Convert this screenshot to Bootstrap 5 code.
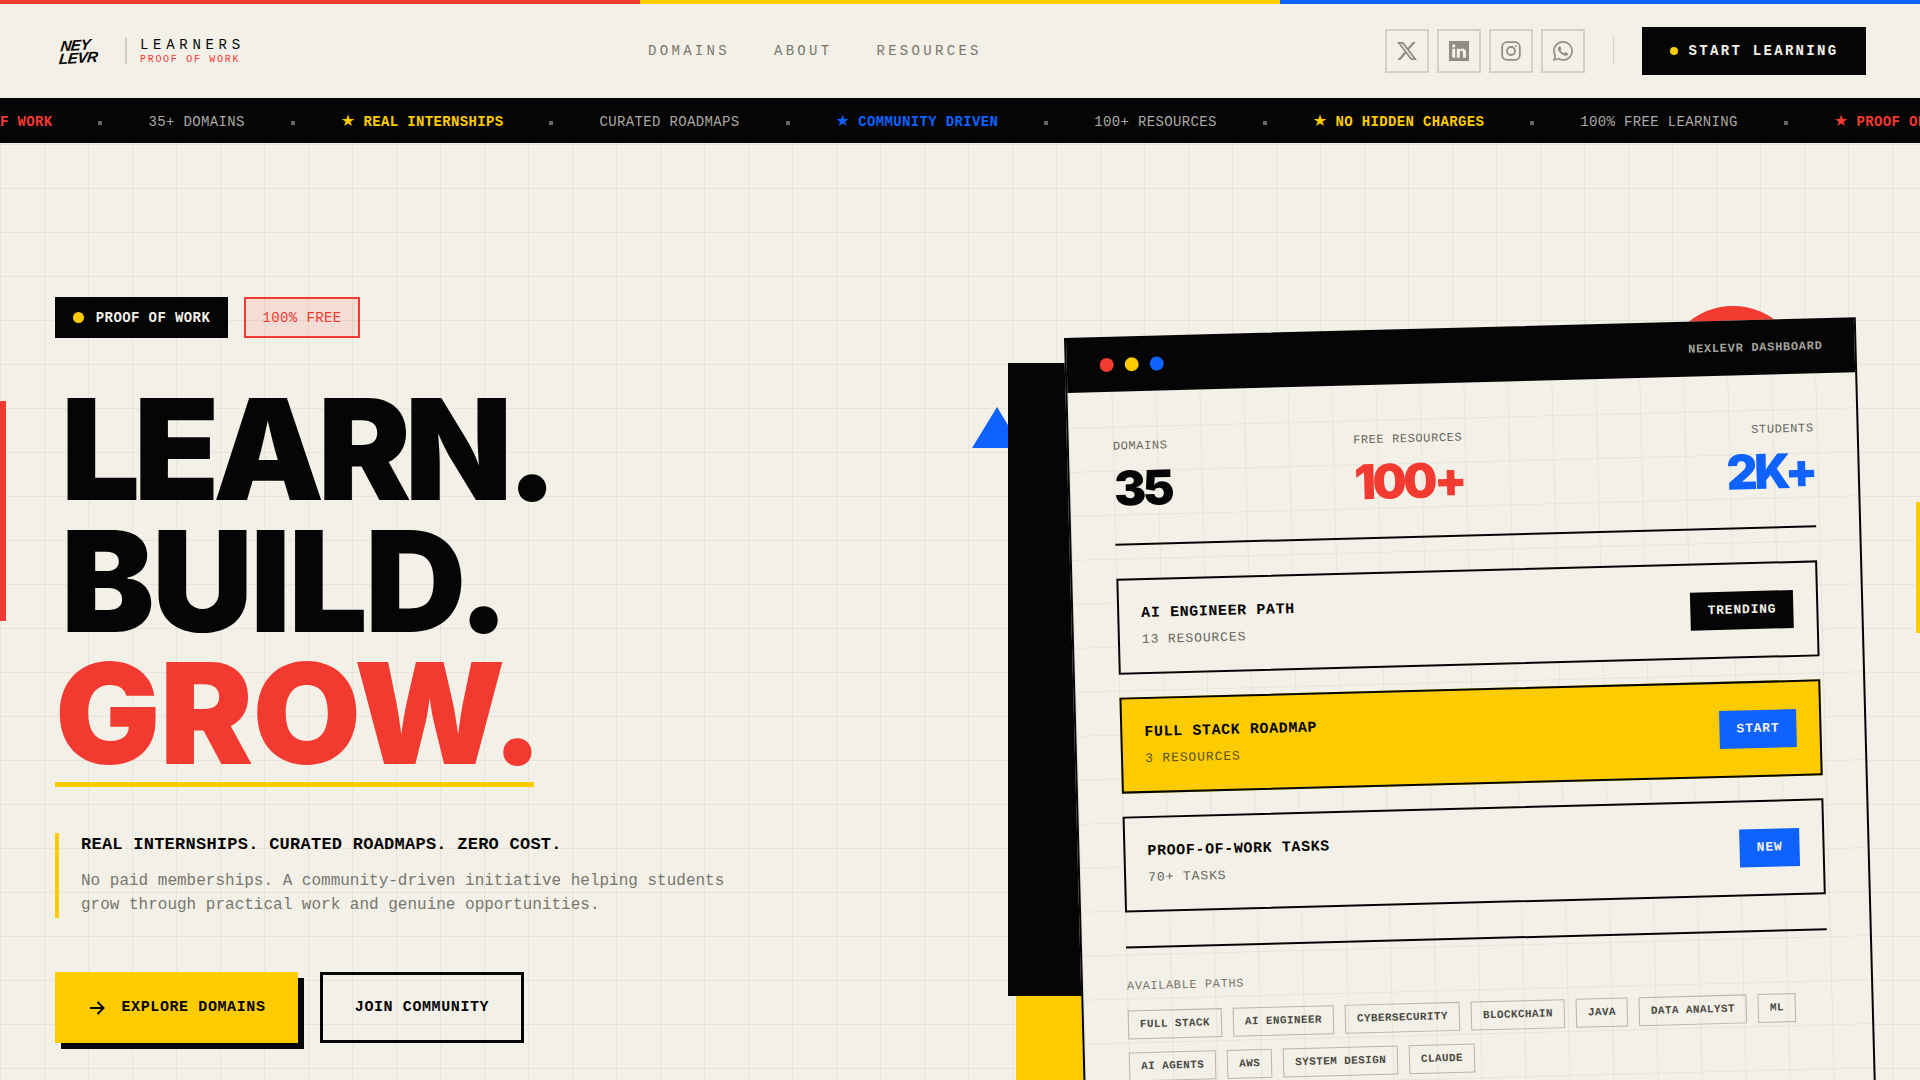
<!DOCTYPE html>
<html lang="en">
<head>
    <meta charset="UTF-8">
    <meta name="viewport" content="width=device-width, initial-scale=1.0">
    <title>Nexlevr Learners</title>
    <link href="https://cdn.jsdelivr.net/npm/bootstrap@5.3.2/dist/css/bootstrap.min.css" rel="stylesheet">
    <style>
        :root {
            --paper: #f3f0e8;
            --ink: #050505;
            --red: #f23a31;
            --yellow: #fccc00;
            --blue: #0f62fe;
            --grey: #77776d;
        }
        html, body { height: 1080px; overflow: hidden; }
        body {
            background: var(--paper);
            color: var(--ink);
            font-family: "Liberation Mono", monospace;
        }
        .stripe { height: 4px; }
        .stripe div { flex: 1; }
        .topbar { height: 94px; padding: 0 54px 0 60px; }
        .logo-mark {
            font: italic 700 15px/13px "Liberation Sans", sans-serif;
            transform: skewX(-10deg) rotate(-4deg);
            width: 40px;
            letter-spacing: -0.5px;
        }
        .logo-name {
            border-left: 2px solid #cfccc3;
            margin-left: 25px;
            padding-left: 13px;
            height: 26px;
        }
        .logo-name b { display: block; font-size: 14px; line-height: 15px; letter-spacing: 4.7px; font-weight: 400; }
        .logo-name i { display: block; font-style: normal; font-size: 10px; line-height: 13px; letter-spacing: 1.7px; color: var(--red); }
        .menu-links { gap: 44px; }
        .menu-links a { color: var(--grey); font-size: 14px; letter-spacing: 3.3px; padding: 0; }
        .social { width: 44px; height: 44px; border: 2px solid #d3d0c7; color: #918d84; }
        .social svg { width: 20px; height: 20px; }
        .nav-sep { width: 1px; height: 28px; background: #d3d0c7; margin: 0 28px; }
        .start-btn {
            background: var(--ink); color: #f3f0e8;
            width: 224px; height: 48px;
            font-size: 14px; font-weight: 700; letter-spacing: 2.3px;
            border: 0; border-radius: 0;
            gap: 11px;
        }
        .start-btn:hover { background: var(--ink); color: #f3f0e8; }
        .y-dot { width: 8px; height: 8px; background: var(--yellow); border-radius: 50%; display: inline-block; }
        .ticker { background: var(--ink); height: 45px; overflow: hidden; white-space: nowrap; }
        .ticker-track { transform: translateX(-84px); font-size: 14px; letter-spacing: .35px; color: #aaa9a4; padding-top: 3px; }
        .ticker-track > span.tk { flex: none; }
        .ticker-track .tk-sep { width: 4px; height: 4px; background: #666; margin: 1px 46px 0; flex: none; }
        .tk-star { font: 16px/1 "DejaVu Sans", sans-serif; margin-right: 8px; }
        .tk-red { color: var(--red); font-weight: 700; }
        .tk-yellow { color: var(--yellow); font-weight: 700; }
        .tk-blue { color: var(--blue); font-weight: 700; }
        .hero {
            position: relative;
            height: 937px;
            overflow: hidden;
            padding: 154px 0 0 55px;
            background-color: var(--paper);
            background-image:
                linear-gradient(rgba(5,5,5,.055) 1px, transparent 1px),
                linear-gradient(90deg, rgba(5,5,5,.055) 1px, transparent 1px);
            background-size: 44px 44px;
            background-position: 0 1px;
        }
        .side-red { position: absolute; left: 0; top: 258px; width: 6px; height: 220px; background: var(--red); }
        .side-yellow { position: absolute; right: 0; top: 359px; width: 4px; height: 131px; background: var(--yellow); }
        .tag { height: 41px; font-size: 14px; letter-spacing: .4px; border-radius: 0; padding-top: 2px; }
        .tag-dark { background: var(--ink); color: #f3f0e8; width: 173px; font-weight: 700; gap: 12px; }
        .tag-dark .y-dot { width: 11px; height: 11px; margin-top: -2px; }
        .tag-free { border: 2px solid var(--red); color: var(--red); background: rgba(242,58,49,.1); width: 116px; }
        .big-title {
            font: 900 140px/132px Inter, sans-serif;
            margin: 45px 0 0 0;
        }
        .big-title span { display: block; }
        .big-title .learn { margin-left: 6px; letter-spacing: -6.5px; }
        .big-title .build { margin-left: 6px; letter-spacing: -2.6px; }
        .big-title .grow { color: var(--red); letter-spacing: -.8px; }
        .title-rule { width: 479px; height: 5px; background: var(--yellow); margin-top: 3px; }
        .pitch { border-left: 4px solid var(--yellow); padding-left: 22px; margin-top: 46px; height: 85px; width: 700px; }
        .pitch h2 { font: 700 17px/24px "Liberation Mono", monospace; letter-spacing: .25px; margin: 0 0 12px; }
        .pitch p { font-size: 16px; line-height: 24px; letter-spacing: 0; color: var(--grey); margin: 0; }
        .cta-row { margin-top: 54px; gap: 22px; }
        .cta { height: 71px; border-radius: 0; font-size: 15px; font-weight: 700; letter-spacing: .6px; color: var(--ink); padding-top: 8px; }
        .cta-main { width: 243px; background: var(--yellow); border: 0; box-shadow: 6px 6px 0 var(--ink); gap: 16px; padding-left: 14px; }
        .cta-main svg { margin-top: -2px; }
        .cta-main:hover { background: var(--yellow); }
        .cta-line { width: 204px; border: 3px solid var(--ink); background: transparent; }
        .shape-triangle { position: absolute; left: 972px; top: 264px; width: 0; height: 0; border-left: 25px solid transparent; border-right: 25px solid transparent; border-bottom: 41px solid var(--blue); }
        .shape-circle { position: absolute; left: 1663px; top: 163px; width: 140px; height: 140px; border-radius: 50%; background: var(--red); }
        .shape-black { position: absolute; left: 1008px; top: 220px; width: 200px; height: 633px; background: var(--ink); }
        .shape-yellow { position: absolute; left: 1016px; top: 853px; width: 200px; height: 100px; background: var(--yellow); }
        .dash {
            position: absolute;
            left: 1064px; top: 195px;
            width: 792px; height: 900px;
            transform: rotate(-1.5deg);
            transform-origin: 0 0;
            border: 2px solid var(--ink);
            border-radius: 0;
            background-color: var(--paper);
            background-image:
                linear-gradient(rgba(5,5,5,.05) 1px, transparent 1px),
                linear-gradient(90deg, rgba(5,5,5,.05) 1px, transparent 1px);
            background-size: 44px 44px;
        }
        .dash-head { background: var(--ink); height: 54px; padding: 0 32px 0 33px; border-radius: 0; margin-top: -1px; }
        .dash-head .dots { gap: 11px; }
        .dash-head .dots i { width: 14px; height: 14px; border-radius: 50%; display: block; }
        .dash-title { font-size: 12px; font-weight: 700; letter-spacing: .7px; color: #a3a29c; }
        .dash-body { padding: 48px 43px 0 44px; }
        .stat-grid { display: grid; grid-template-columns: repeat(3, 1fr); gap: 20px; }
        .stat-label { font-size: 12px; letter-spacing: .6px; color: #66665d; line-height: 14px; }
        .stat-num { font: 900 48px/50px Inter, sans-serif; letter-spacing: -3.4px; margin-top: 10px; }
        .rule-ink { height: 2px; background: var(--ink); margin: 0; opacity: 1; border: 0; }
        .path-row { height: 96px; border: 2px solid var(--ink); padding: 0 23px 0 22px; margin-bottom: 23px; background: var(--paper); }
        .path-row.hot { background: var(--yellow); }
        .path-name { font-size: 15px; font-weight: 700; letter-spacing: .6px; line-height: 18px; }
        .path-sub { font-size: 13px; letter-spacing: .9px; color: #66665d; line-height: 16px; margin-top: 9px; }
        .hot .path-sub { color: #5d5320; }
        .path-tag { height: 38px; font-size: 13px; font-weight: 700; letter-spacing: .8px; color: #f3f0e8; padding: 0 17px; }
        .bg-ink { background: var(--ink); }
        .bg-azure { background: var(--blue); }
        .paths-label { font-size: 12px; letter-spacing: .6px; color: #77776d; margin: 31px 0 17px; line-height: 14px; }
        .chips { gap: 13px 11px; width: 700px; }
        .chip-item { font-size: 11px; font-weight: 700; letter-spacing: .4px; height: 29px; padding: 0 11px; border: 1.5px solid #b8b5ac; color: #4a4a44; display: flex; align-items: center; }
    </style>
</head>
<body>
    <div class="stripe d-flex">
        <div style="background:#f23a31"></div>
        <div style="background:#fccc00"></div>
        <div style="background:#0f62fe"></div>
    </div>

    <nav class="topbar d-flex align-items-center justify-content-between">
        <a class="d-flex align-items-center text-decoration-none text-reset" href="#">
            <div class="logo-mark">NEY<br>LEVR</div>
            <div class="logo-name">
                <b>LEARNERS</b>
                <i>PROOF OF WORK</i>
            </div>
        </a>
        <div class="menu-links nav">
            <a class="nav-link" href="#">DOMAINS</a>
            <a class="nav-link" href="#">ABOUT</a>
            <a class="nav-link" href="#">RESOURCES</a>
        </div>
        <div class="d-flex align-items-center">
            <div class="d-flex gap-2">
                <a class="social d-flex align-items-center justify-content-center" href="#">
                    <svg viewBox="0 0 16 16" fill="currentColor"><path d="M12.6.75h2.454l-5.36 6.142L16 15.25h-4.937l-3.867-5.07-4.425 5.07H.316l5.733-6.57L0 .75h5.063l3.495 4.633L12.601.75Zm-.86 13.028h1.36L4.323 2.145H2.865z"/></svg>
                </a>
                <a class="social d-flex align-items-center justify-content-center" href="#">
                    <svg viewBox="0 0 16 16" fill="currentColor"><path d="M0 0h16v16H0zm4.943 13.394V6.169H2.542v7.225zm-1.2-8.212c.837 0 1.358-.554 1.358-1.248-.015-.709-.52-1.248-1.342-1.248S2.4 3.226 2.4 3.934c0 .694.521 1.248 1.327 1.248zm4.908 8.212V9.359c0-.216.016-.432.08-.586.173-.431.568-.878 1.232-.878.869 0 1.216.662 1.216 1.634v3.865h2.401V9.25c0-2.22-1.184-3.252-2.764-3.252-1.274 0-1.845.7-2.165 1.193v.025h-.016l.016-.025V6.169h-2.4c.03.678 0 7.225 0 7.225z" fill-rule="evenodd"/></svg>
                </a>
                <a class="social d-flex align-items-center justify-content-center" href="#">
                    <svg viewBox="0 0 20 20" fill="none" stroke="currentColor" stroke-width="1.8"><rect x="1.2" y="1.2" width="17.6" height="17.6" rx="4.6"/><circle cx="10" cy="10" r="4"/><circle cx="15" cy="5" r=".9" fill="currentColor" stroke="none"/></svg>
                </a>
                <a class="social d-flex align-items-center justify-content-center" href="#">
                    <svg viewBox="0 0 16 16" fill="currentColor"><path d="M13.601 2.326A7.85 7.85 0 0 0 7.994 0C3.627 0 .068 3.558.064 7.926c0 1.399.366 2.76 1.057 3.965L0 16l4.204-1.102a7.9 7.9 0 0 0 3.79.965h.004c4.368 0 7.926-3.558 7.93-7.93A7.9 7.9 0 0 0 13.6 2.326zM7.994 14.521a6.6 6.6 0 0 1-3.356-.92l-.24-.144-2.494.654.666-2.433-.156-.251a6.56 6.56 0 0 1-1.007-3.505c0-3.626 2.957-6.584 6.591-6.584a6.56 6.56 0 0 1 4.66 1.931 6.56 6.56 0 0 1 1.928 4.66c-.004 3.639-2.961 6.592-6.592 6.592m3.615-4.934c-.197-.099-1.17-.578-1.353-.646-.182-.065-.315-.099-.445.099-.133.197-.513.646-.627.775-.114.133-.232.148-.43.05-.197-.1-.836-.308-1.592-.985-.59-.525-.985-1.175-1.103-1.372-.114-.198-.011-.304.088-.403.087-.088.197-.232.296-.346.1-.114.133-.198.198-.33.065-.134.034-.248-.015-.347-.05-.099-.445-1.076-.612-1.47-.16-.389-.323-.335-.445-.34-.114-.007-.247-.007-.38-.007a.73.73 0 0 0-.529.247c-.182.198-.691.677-.691 1.654s.71 1.916.81 2.049c.098.133 1.394 2.132 3.383 2.992.47.205.84.326 1.129.418.475.152.904.129 1.246.08.38-.058 1.171-.48 1.338-.943.164-.464.164-.86.114-.943-.049-.084-.182-.133-.38-.232z"/></svg>
                </a>
            </div>
            <div class="nav-sep"></div>
            <a class="btn start-btn d-flex align-items-center justify-content-center" href="#"><span class="y-dot"></span>START LEARNING</a>
        </div>
    </nav>

    <div class="ticker d-flex align-items-center">
        <div class="ticker-track d-flex align-items-center">
            <span class="tk tk-red"><span class="tk-star">★</span>PROOF OF WORK</span><span class="tk-sep"></span>
            <span class="tk">35+ DOMAINS</span><span class="tk-sep"></span>
            <span class="tk tk-yellow"><span class="tk-star">★</span>REAL INTERNSHIPS</span><span class="tk-sep"></span>
            <span class="tk">CURATED ROADMAPS</span><span class="tk-sep"></span>
            <span class="tk tk-blue"><span class="tk-star">★</span>COMMUNITY DRIVEN</span><span class="tk-sep"></span>
            <span class="tk">100+ RESOURCES</span><span class="tk-sep"></span>
            <span class="tk tk-yellow"><span class="tk-star">★</span>NO HIDDEN CHARGES</span><span class="tk-sep"></span>
            <span class="tk">100% FREE LEARNING</span><span class="tk-sep"></span>
            <span class="tk tk-red"><span class="tk-star">★</span>PROOF OF WORK</span><span class="tk-sep"></span>
        </div>
    </div>

    <section class="hero">
        <div class="side-red"></div>
        <div class="side-yellow"></div>

        <div class="d-flex gap-3">
            <span class="tag tag-dark d-flex align-items-center justify-content-center"><span class="y-dot"></span>PROOF OF WORK</span>
            <span class="tag tag-free d-flex align-items-center justify-content-center">100% FREE</span>
        </div>

        <h1 class="big-title">
            <span class="learn">LEARN.</span>
            <span class="build">BUILD.</span>
            <span class="grow">GROW.</span>
        </h1>
        <div class="title-rule"></div>

        <div class="pitch">
            <h2>REAL INTERNSHIPS. CURATED ROADMAPS. ZERO COST.</h2>
            <p>No paid memberships. A community-driven initiative helping students<br>grow through practical work and genuine opportunities.</p>
        </div>

        <div class="cta-row d-flex">
            <a class="btn cta cta-main d-flex align-items-center justify-content-center" href="#">
                <svg width="16" height="14" viewBox="0 0 16 14" fill="none" stroke="currentColor" stroke-width="2"><path d="M1 7h13M8.5 1l6 6-6 6"/></svg>
                EXPLORE DOMAINS
            </a>
            <a class="btn cta cta-line d-flex align-items-center justify-content-center" href="#">JOIN COMMUNITY</a>
        </div>

        <div class="shape-triangle"></div>
        <div class="shape-circle"></div>
        <div class="shape-black"></div>
        <div class="shape-yellow"></div>

        <div class="card dash">
            <div class="dash-head d-flex align-items-center justify-content-between">
                <div class="dots d-flex">
                    <i style="background:#f23a31"></i>
                    <i style="background:#fccc00"></i>
                    <i style="background:#0f62fe"></i>
                </div>
                <div class="dash-title">NEXLEVR DASHBOARD</div>
            </div>
            <div class="dash-body">
                <div class="stat-grid">
                    <div>
                        <div class="stat-label">DOMAINS</div>
                        <div class="stat-num">35</div>
                    </div>
                    <div>
                        <div class="stat-label">FREE RESOURCES</div>
                        <div class="stat-num" style="color:#f23a31">100+</div>
                    </div>
                    <div class="text-end">
                        <div class="stat-label">STUDENTS</div>
                        <div class="stat-num" style="color:#0f62fe">2K+</div>
                    </div>
                </div>
                <hr class="rule-ink" style="margin:30px 0 33px">

                <div class="path-row d-flex align-items-center justify-content-between">
                    <div>
                        <div class="path-name">AI ENGINEER PATH</div>
                        <div class="path-sub">13 RESOURCES</div>
                    </div>
                    <span class="path-tag bg-ink d-flex align-items-center">TRENDING</span>
                </div>
                <div class="path-row hot d-flex align-items-center justify-content-between">
                    <div>
                        <div class="path-name">FULL STACK ROADMAP</div>
                        <div class="path-sub">3 RESOURCES</div>
                    </div>
                    <span class="path-tag bg-azure d-flex align-items-center">START</span>
                </div>
                <div class="path-row d-flex align-items-center justify-content-between">
                    <div>
                        <div class="path-name">PROOF-OF-WORK TASKS</div>
                        <div class="path-sub">70+ TASKS</div>
                    </div>
                    <span class="path-tag bg-azure d-flex align-items-center">NEW</span>
                </div>
                <hr class="rule-ink" style="margin:34px 0 0">

                <div class="paths-label">AVAILABLE PATHS</div>
                <div class="chips d-flex flex-wrap">
                    <span class="chip-item">FULL STACK</span>
                    <span class="chip-item">AI ENGINEER</span>
                    <span class="chip-item">CYBERSECURITY</span>
                    <span class="chip-item">BLOCKCHAIN</span>
                    <span class="chip-item">JAVA</span>
                    <span class="chip-item">DATA ANALYST</span>
                    <span class="chip-item">ML</span>
                    <span class="chip-item">AI AGENTS</span>
                    <span class="chip-item">AWS</span>
                    <span class="chip-item">SYSTEM DESIGN</span>
                    <span class="chip-item">CLAUDE</span>
                </div>
            </div>
        </div>
    </section>
</body>
</html>
